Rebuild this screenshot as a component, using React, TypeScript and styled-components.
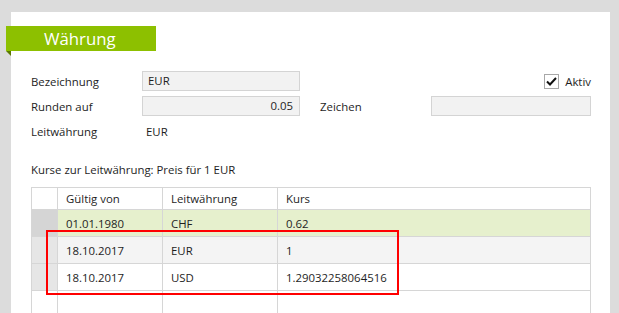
import styled, { createGlobalStyle } from 'styled-components';

const GlobalStyle = createGlobalStyle`
	html, body {
		margin: 0;
		padding: 0;
		background: #dcdcdc;
		font-family: 'Open Sans', 'Noto Sans', sans-serif;
		font-size: 11.4px;
		color: #1e1e1e;
		overflow: hidden;
	}
`;

const Page = styled.div`
	position: relative;
	padding: 12px 0 0 11px;
	height: 313px;
	box-sizing: border-box;
`;

const Panel = styled.div`
	width: 599px;
	height: 100%;
	background: #fff;
	padding: 14px 19px 0 20px;
	box-sizing: border-box;
`;

const Ribbon = styled.div`
	position: relative;
	margin-left: -25px;
	width: 150px;
	height: 25px;
	background: #8dc000;
	color: #fff;
	font-size: 16.8px;
	line-height: 25px;
	padding-left: 38px;
	box-sizing: border-box;

	&::after {
		content: '';
		position: absolute;
		left: 0;
		bottom: -5px;
		border-top: 5px solid #5a7a00;
		border-left: 5px solid transparent;
	}
`;

const Form = styled.div`
	display: grid;
	grid-template-columns: 111px 158px 20px 111px 160px;
	grid-auto-rows: 20px;
	row-gap: 5px;
	margin-top: 20px;
	align-items: center;
`;

const Label = styled.div<{ $col?: number }>`
	grid-column: ${(p) => p.$col ?? 1};
	white-space: nowrap;
`;

const Field = styled.div<{ $align?: string; $col?: number }>`
	grid-column: ${(p) => p.$col ?? 2};
	height: 20px;
	box-sizing: border-box;
	border: 1px solid #d4d4d4;
	background: #f2f2f2;
	padding: 0 6px 0 5px;
	line-height: 18px;
	text-align: ${(p) => p.$align ?? 'left'};
`;

const Plain = styled.div`
	grid-column: 2;
	padding-left: 4px;
`;

const CheckWrap = styled.label`
	grid-column: 5;
	display: flex;
	align-items: center;
	justify-content: flex-end;
	gap: 6px;
	margin-top: 1px;
`;

const Box = styled.span`
	width: 13px;
	height: 13px;
	border: 1px solid #a8a8a8;
	background: #fff;
	display: flex;
	align-items: center;
	justify-content: center;
`;

const Caption = styled.div`
	margin-top: 20px;
	height: 18px;
	line-height: 18px;
`;

const Table = styled.div`
	margin-top: 8px;
	border: 1px solid #d6d6d6;
	border-bottom: none;
`;

const Row = styled.div<{ $bg?: string; $h?: number }>`
	display: grid;
	grid-template-columns: 26px 105px 115px 1fr;
	height: ${(p) => p.$h ?? 27}px;
	background: ${(p) => p.$bg ?? '#fff'};
	border-bottom: 1px solid #d6d6d6;
	box-sizing: border-box;
`;

const RowHead = styled.div<{ $bg?: string }>`
	background: ${(p) => p.$bg ?? '#fff'};
	border-right: 1px solid #d6d6d6;
`;

const Cell = styled.div<{ $last?: boolean }>`
	padding-left: 8px;
	display: flex;
	align-items: center;
	border-right: ${(p) => (p.$last ? 'none' : '1px solid #d6d6d6')};
	white-space: nowrap;
`;

const Highlight = styled.div`
	position: absolute;
	left: 46px;
	top: 230px;
	width: 353px;
	height: 65px;
	border: 2px solid #ff0000;
	box-sizing: border-box;
	pointer-events: none;
`;

const rows = [
	{ von: '01.01.1980', lw: 'CHF', kurs: '0.62', bg: '#e6f0cd', head: '#d5d5d5' },
	{ von: '18.10.2017', lw: 'EUR', kurs: '1', bg: '#f4f4f4', head: '#e6e6e6' },
	{ von: '18.10.2017', lw: 'USD', kurs: '1.29032258064516', bg: '#fff', head: '#e6e6e6' },
];

export default function App() {
	return (
		<>
			<GlobalStyle />
			<Page>
				<Panel>
					<Ribbon>Währung</Ribbon>
					<Form>
						<Label>Bezeichnung</Label>
						<Field>EUR</Field>
						<CheckWrap>
							<Box>
								<svg width="11" height="9" viewBox="0 0 11 9">
									<path d="M1 4.5 L4 7.5 L10 1" fill="none" stroke="#111" strokeWidth="2" />
								</svg>
							</Box>
							Aktiv
						</CheckWrap>
						<Label>Runden auf</Label>
						<Field $align="right">0.05</Field>
						<Label $col={4}>Zeichen</Label>
						<Field $col={5} />
						<Label>Leitwährung</Label>
						<Plain>EUR</Plain>
					</Form>
					<Caption>Kurse zur Leitwährung: Preis für 1 EUR</Caption>
					<Table>
						<Row $h={22}>
							<RowHead />
							<Cell>Gültig von</Cell>
							<Cell>Leitwährung</Cell>
							<Cell $last>Kurs</Cell>
						</Row>
						{rows.map((r, i) => (
							<Row key={i} $bg={r.bg}>
								<RowHead $bg={r.head} />
								<Cell>{r.von}</Cell>
								<Cell>{r.lw}</Cell>
								<Cell $last>{r.kurs}</Cell>
							</Row>
						))}
						<Row>
							<RowHead />
							<Cell />
							<Cell />
							<Cell $last />
						</Row>
					</Table>
				</Panel>
				<Highlight />
			</Page>
		</>
	);
}
